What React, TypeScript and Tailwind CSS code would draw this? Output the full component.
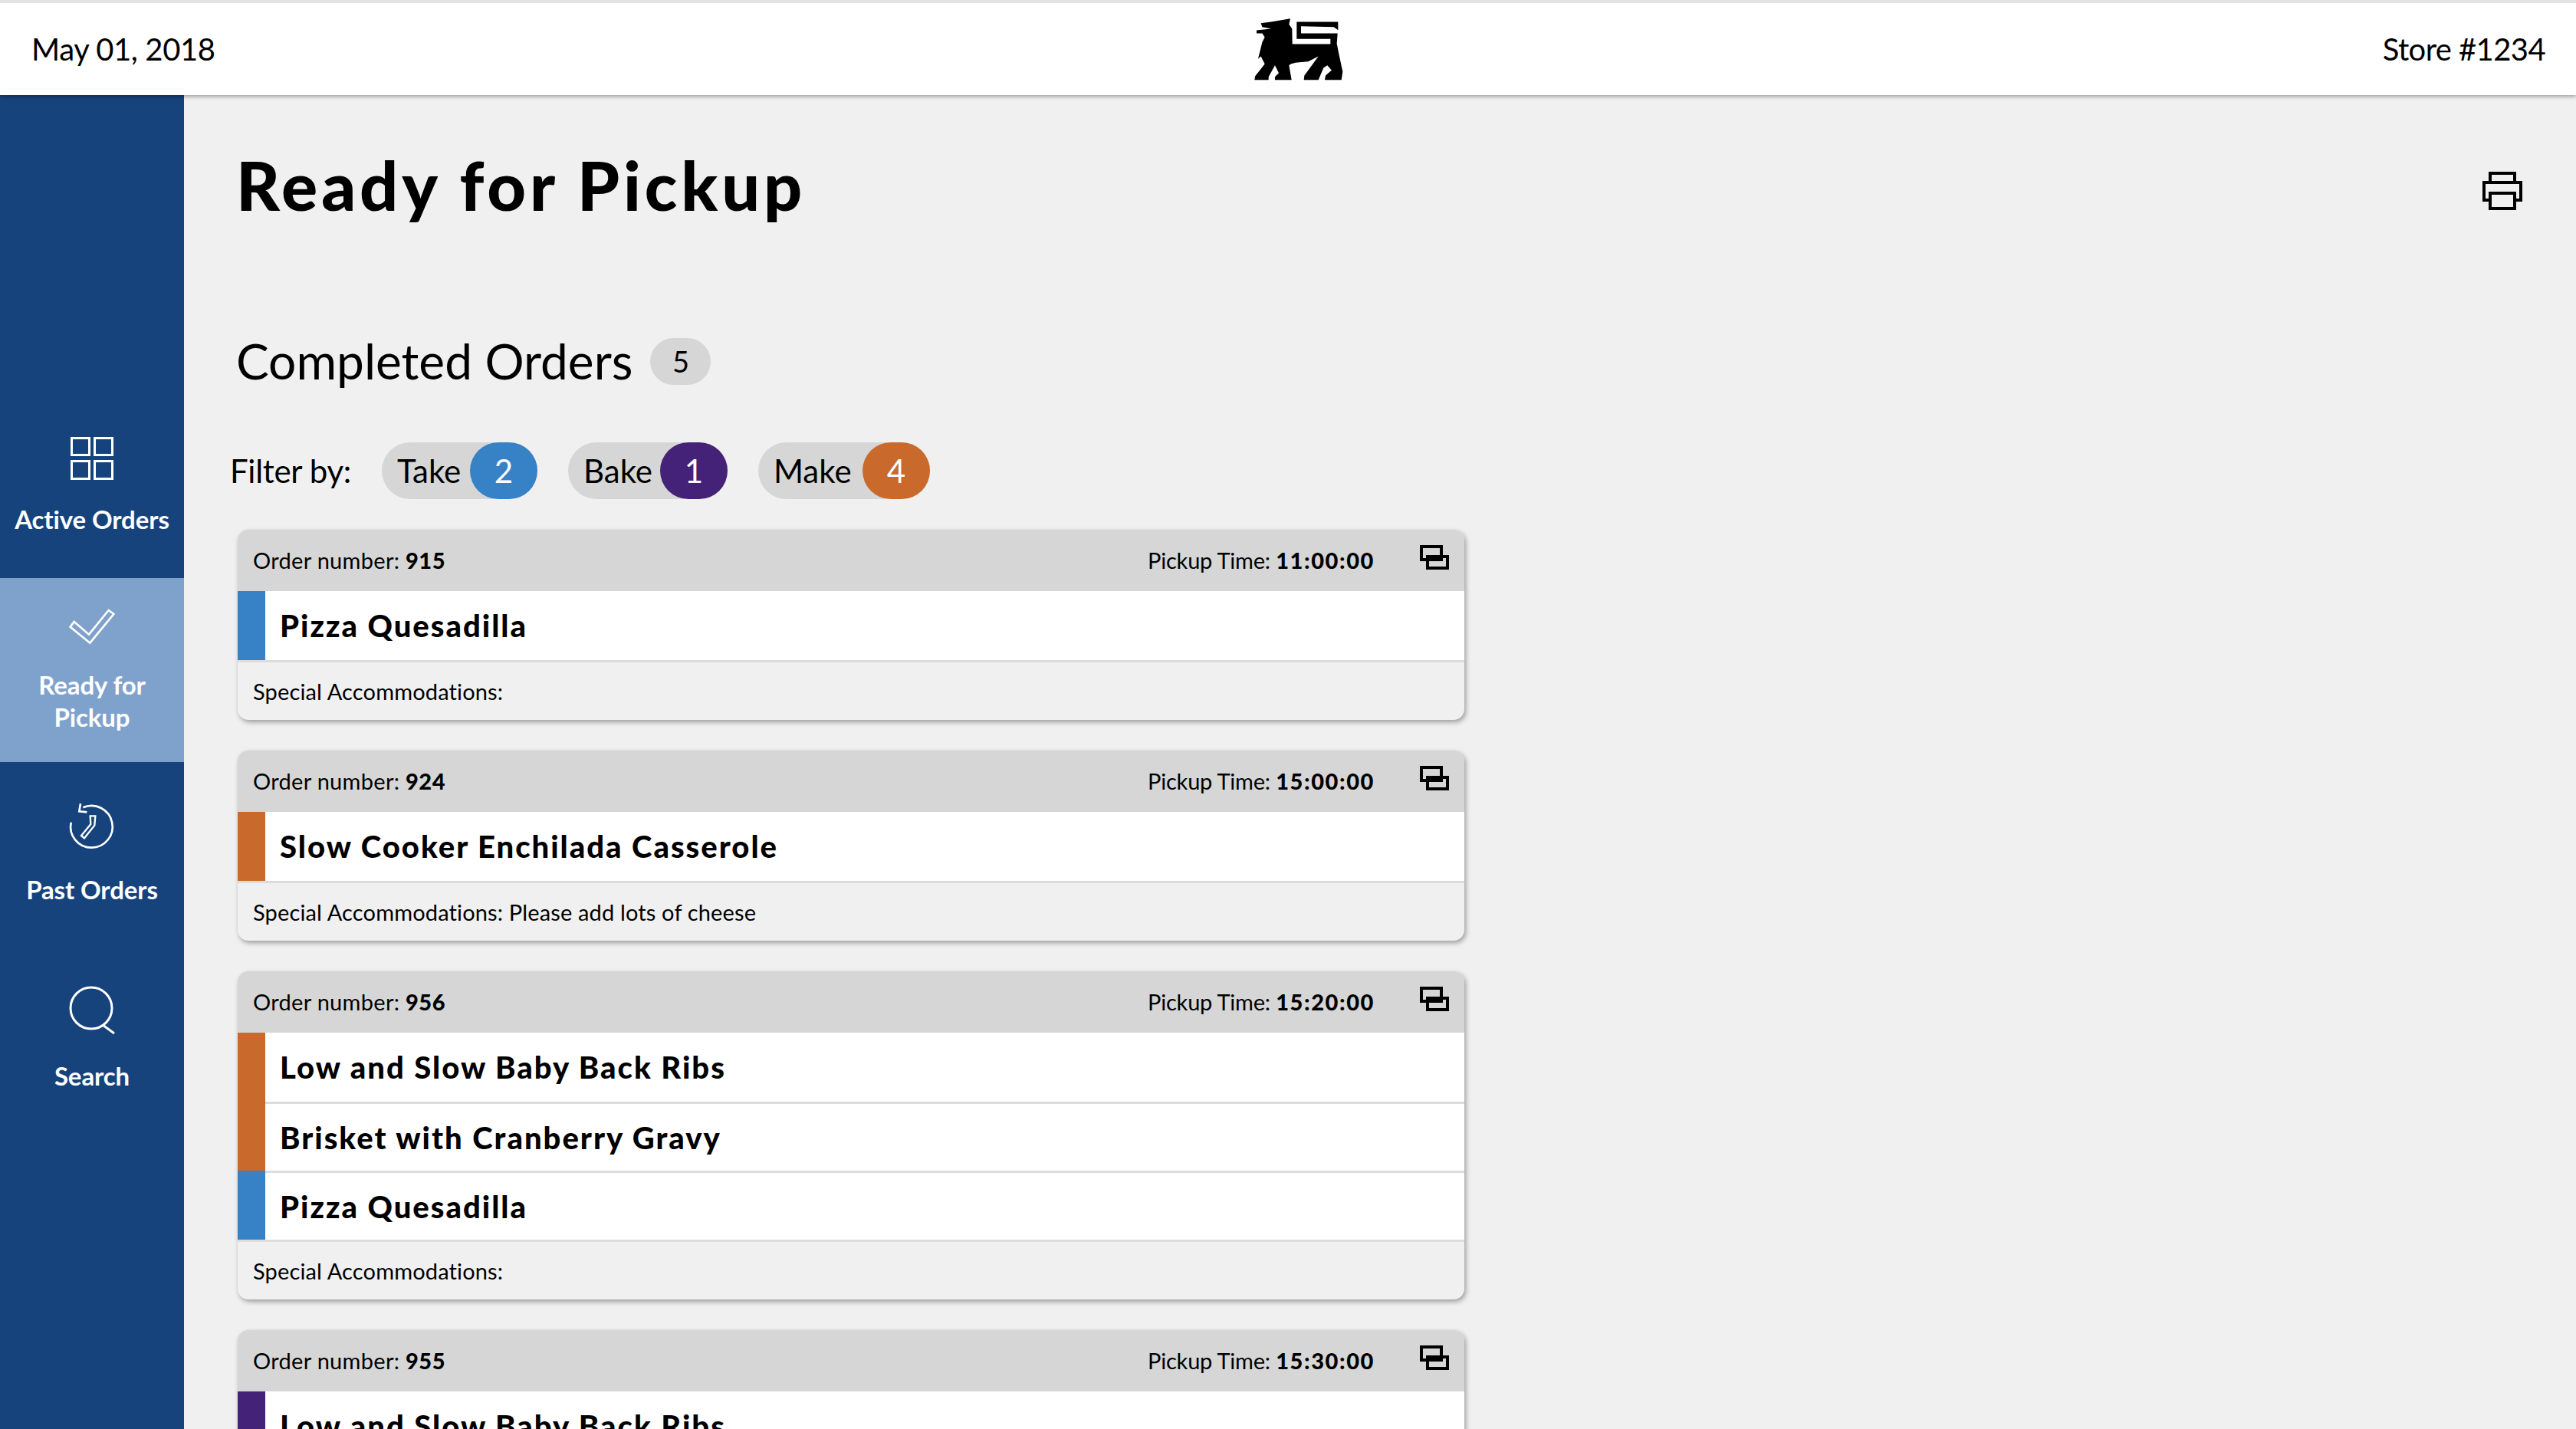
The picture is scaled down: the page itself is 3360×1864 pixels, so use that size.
import React from "react";

const BLUE = "bg-[#3781c7]";
const PURPLE = "bg-[#442277]";
const ORANGE = "bg-[#c96a2c]";

const orders = [
  {
    number: "915",
    time: "11:00:00",
    note: "",
    items: [{ name: "Pizza Quesadilla", color: BLUE }],
  },
  {
    number: "924",
    time: "15:00:00",
    note: "Please add lots of cheese",
    items: [{ name: "Slow Cooker Enchilada Casserole", color: ORANGE }],
  },
  {
    number: "956",
    time: "15:20:00",
    note: "",
    items: [
      { name: "Low and Slow Baby Back Ribs", color: ORANGE },
      { name: "Brisket with Cranberry Gravy", color: ORANGE },
      { name: "Pizza Quesadilla", color: BLUE },
    ],
  },
  {
    number: "955",
    time: "15:30:00",
    note: "",
    items: [{ name: "Low and Slow Baby Back Ribs", color: PURPLE }],
  },
];

const filters = [
  { label: "Take", count: 2, color: BLUE, width: "w-[203px]" },
  { label: "Bake", count: 1, color: PURPLE, width: "w-[208px]" },
  { label: "Make", count: 4, color: ORANGE, width: "w-[224px]" },
];

const Logo = () => (
  <svg width="120" height="87" viewBox="100 60 360 260" className="mt-[-1px] mr-[2px]">
    <path
      fill="#000"
      d="M135 90 L175 85 L250 72 L245 95 L257 112 L258 172 L407 172 L407 152 L275 152 L275 85 L437 85 L437 117 L420 105 L292 102 L292 130 L435 130 L432 170 L440 210 L455 280 L450 312 L385 312 L388 295 L405 280 L412 275 L395 255 L380 265 L360 312 L303 312 L305 295 L360 220 L320 240 L270 245 L252 250 L245 255 L255 312 L190 312 L190 300 L205 285 L190 255 L165 300 L165 312 L110 312 L112 298 L150 250 L135 220 L124 230 L140 165 L150 145 L140 130 L118 130 L118 118 L175 112 L140 105 Z"
    />
  </svg>
);

const GridIcon = () => (
  <svg width="56" height="56" viewBox="0 0 56 56" fill="none" stroke="#fff" strokeWidth="3">
    <rect x="1.5" y="1.5" width="23" height="22" />
    <rect x="31.5" y="1.5" width="23" height="22" />
    <rect x="1.5" y="31.5" width="23" height="23" />
    <rect x="31.5" y="31.5" width="23" height="23" />
  </svg>
);

const CheckIcon = () => (
  <svg width="80" height="60" viewBox="0 0 240 180" fill="none" stroke="#fff" strokeWidth="8">
    <path d="M50 75 L108 125 L185 30 L205 45 L112 158 L35 95 Z" />
  </svg>
);

const ClockIcon = () => (
  <svg width="80" height="80" viewBox="0 0 240 240" fill="none" stroke="#fff" strokeWidth="8">
    <path d="M85 40 A82 82 0 1 1 38 98" />
    <path d="M75 25 L70 55 L100 58" />
    <path d="M113 73 L133 73 L130 110 L90 160 L78 150 L115 105 Z" strokeWidth="7" />
  </svg>
);

const SearchIcon = () => (
  <svg width="60" height="64" viewBox="0 0 60 64" fill="none" stroke="#fff" strokeWidth="3">
    <circle cx="29" cy="29" r="27" />
    <path d="M44 51 L59 62" />
  </svg>
);

const PrinterIcon = () => (
  <svg width="52" height="50" viewBox="0 0 52 50" fill="none" stroke="#000" strokeWidth="4">
    <path d="M10 14 V2 H42 V14" />
    <path d="M8 37 H2 V14 H50 V37 H44" />
    <rect x="10" y="28" width="32" height="20" />
  </svg>
);

const CopyIcon = () => (
  <svg width="38" height="32" viewBox="0 0 38 32" fill="none" stroke="#000" strokeWidth="4" className="-mt-[8px]">
    <rect x="2" y="2" width="26" height="17" />
    <rect x="10" y="15" width="26" height="15" />
  </svg>
);

const NavItem = ({
  icon,
  label,
  className,
  labelClass,
}: {
  icon: React.ReactNode;
  label: React.ReactNode;
  className: string;
  labelClass: string;
}) => (
  <div className={`flex flex-col items-center text-white text-center font-bold text-[33px] leading-[42px] tracking-[-0.1px] ${className}`}>
    <div className="h-[64px] flex items-center justify-center">{icon}</div>
    <div className={labelClass}>{label}</div>
  </div>
);

const OrderCard = ({ order }: { order: (typeof orders)[number] }) => (
  <div className="w-[1600px] rounded-[14px] overflow-hidden bg-[#f0f0f0] shadow-[2px_3px_6px_rgba(0,0,0,0.35)] shrink-0">
    <div className="h-[80px] bg-[#d6d6d6] flex items-center pl-[20px] pr-[20px] text-[29px]">
      <div className="tracking-[0.3px]">
        Order number: <span className="font-black tracking-[0.5px]">{order.number}</span>
      </div>
      <div className="ml-auto mr-[59px] tracking-[-0.2px]">
        Pickup Time: <span className="font-black tracking-[1.6px]">{order.time}</span>
      </div>
      <CopyIcon />
    </div>
    {order.items.map((item, i) => (
      <div key={i} className="h-[90px] bg-white flex">
        <div className={`w-[36px] ${item.color}`} />
        <div
          className={`flex-1 pl-[19px] flex items-center text-[40px] font-black tracking-[2px] ${i > 0 ? "border-t-[3px] border-[#dcdcdc]" : ""}`}
        >
          {item.name}
        </div>
      </div>
    ))}
    <div className="h-[78px] border-t-[3px] border-[#dcdcdc] flex items-center pl-[20px] text-[29px] tracking-[0.15px]">
      Special Accommodations:{order.note ? ` ${order.note}` : ""}
    </div>
  </div>
);

export default function App() {
  return (
    <div className="w-[3360px] h-[1864px] overflow-hidden flex flex-col bg-[#f0f0f0] text-black font-['Lato',sans-serif]">
      <header className="h-[124px] shrink-0 bg-white border-t-4 border-[#e2e2e2] flex items-center justify-between pl-[41px] pr-[40px] text-[40px] shadow-[0_2px_5px_rgba(0,0,0,0.35)] relative z-10">
        <div className="tracking-[-0.4px]">May 01, 2018</div>
        <Logo />
        <div className="tracking-[-0.6px]">Store #1234</div>
      </header>
      <div className="flex flex-1 min-h-0">
        <nav className="w-[240px] shrink-0 bg-[#17437d] flex flex-col">
          <NavItem
            icon={<GridIcon />}
            label="Active Orders"
            className="h-[240px] mt-[390px] pt-[52px]"
            labelClass="mt-[26px]"
          />
          <NavItem
            icon={<CheckIcon />}
            label={
              <>
                Ready for
                <br />
                Pickup
              </>
            }
            className="h-[240px] pt-[30px] bg-[#7fa2cc]"
            labelClass="mt-[24px]"
          />
          <NavItem icon={<ClockIcon />} label="Past Orders" className="h-[243px] pt-[54px]" labelClass="mt-[27px]" />
          <NavItem icon={<SearchIcon />} label="Search" className="h-[243px] pt-[49px]" labelClass="mt-[32px]" />
        </nav>
        <main className="flex-1 min-w-0 pl-[70px] pr-[70px] flex flex-col">
          <div className="flex items-start justify-between pt-[62px]">
            <h1 className="-ml-[2px] text-[88px] leading-[110px] font-black tracking-[4.9px]">Ready for Pickup</h1>
            <div className="mt-[38px]">
              <PrinterIcon />
            </div>
          </div>
          <div className="flex items-center mt-[135px]">
            <h2 className="-ml-[2px] text-[64px] leading-[80px]">Completed Orders</h2>
            <div className="ml-[23px] w-[79px] h-[61px] rounded-full bg-[#d6d6d6] flex items-center justify-center text-[38px]">
              5
            </div>
          </div>
          <div className="flex items-center mt-[66px] -ml-[10px] text-[42px]">
            <div className="w-[198px] tracking-[-0.3px]">Filter by:</div>
            <div className="flex gap-[40px]">
              {filters.map((f) => (
                <div key={f.label} className={`h-[74px] ${f.width} rounded-full bg-[#d6d6d6] flex items-center justify-between pl-[20px]`}>
                  <span>{f.label}</span>
                  <span className={`w-[88px] h-[74px] rounded-full ${f.color} text-white flex items-center justify-center`}>
                    {f.count}
                  </span>
                </div>
              ))}
            </div>
          </div>
          <div className="flex flex-col gap-[40px] mt-[40px]">
            {orders.map((o) => (
              <OrderCard key={o.number} order={o} />
            ))}
          </div>
        </main>
      </div>
    </div>
  );
}
